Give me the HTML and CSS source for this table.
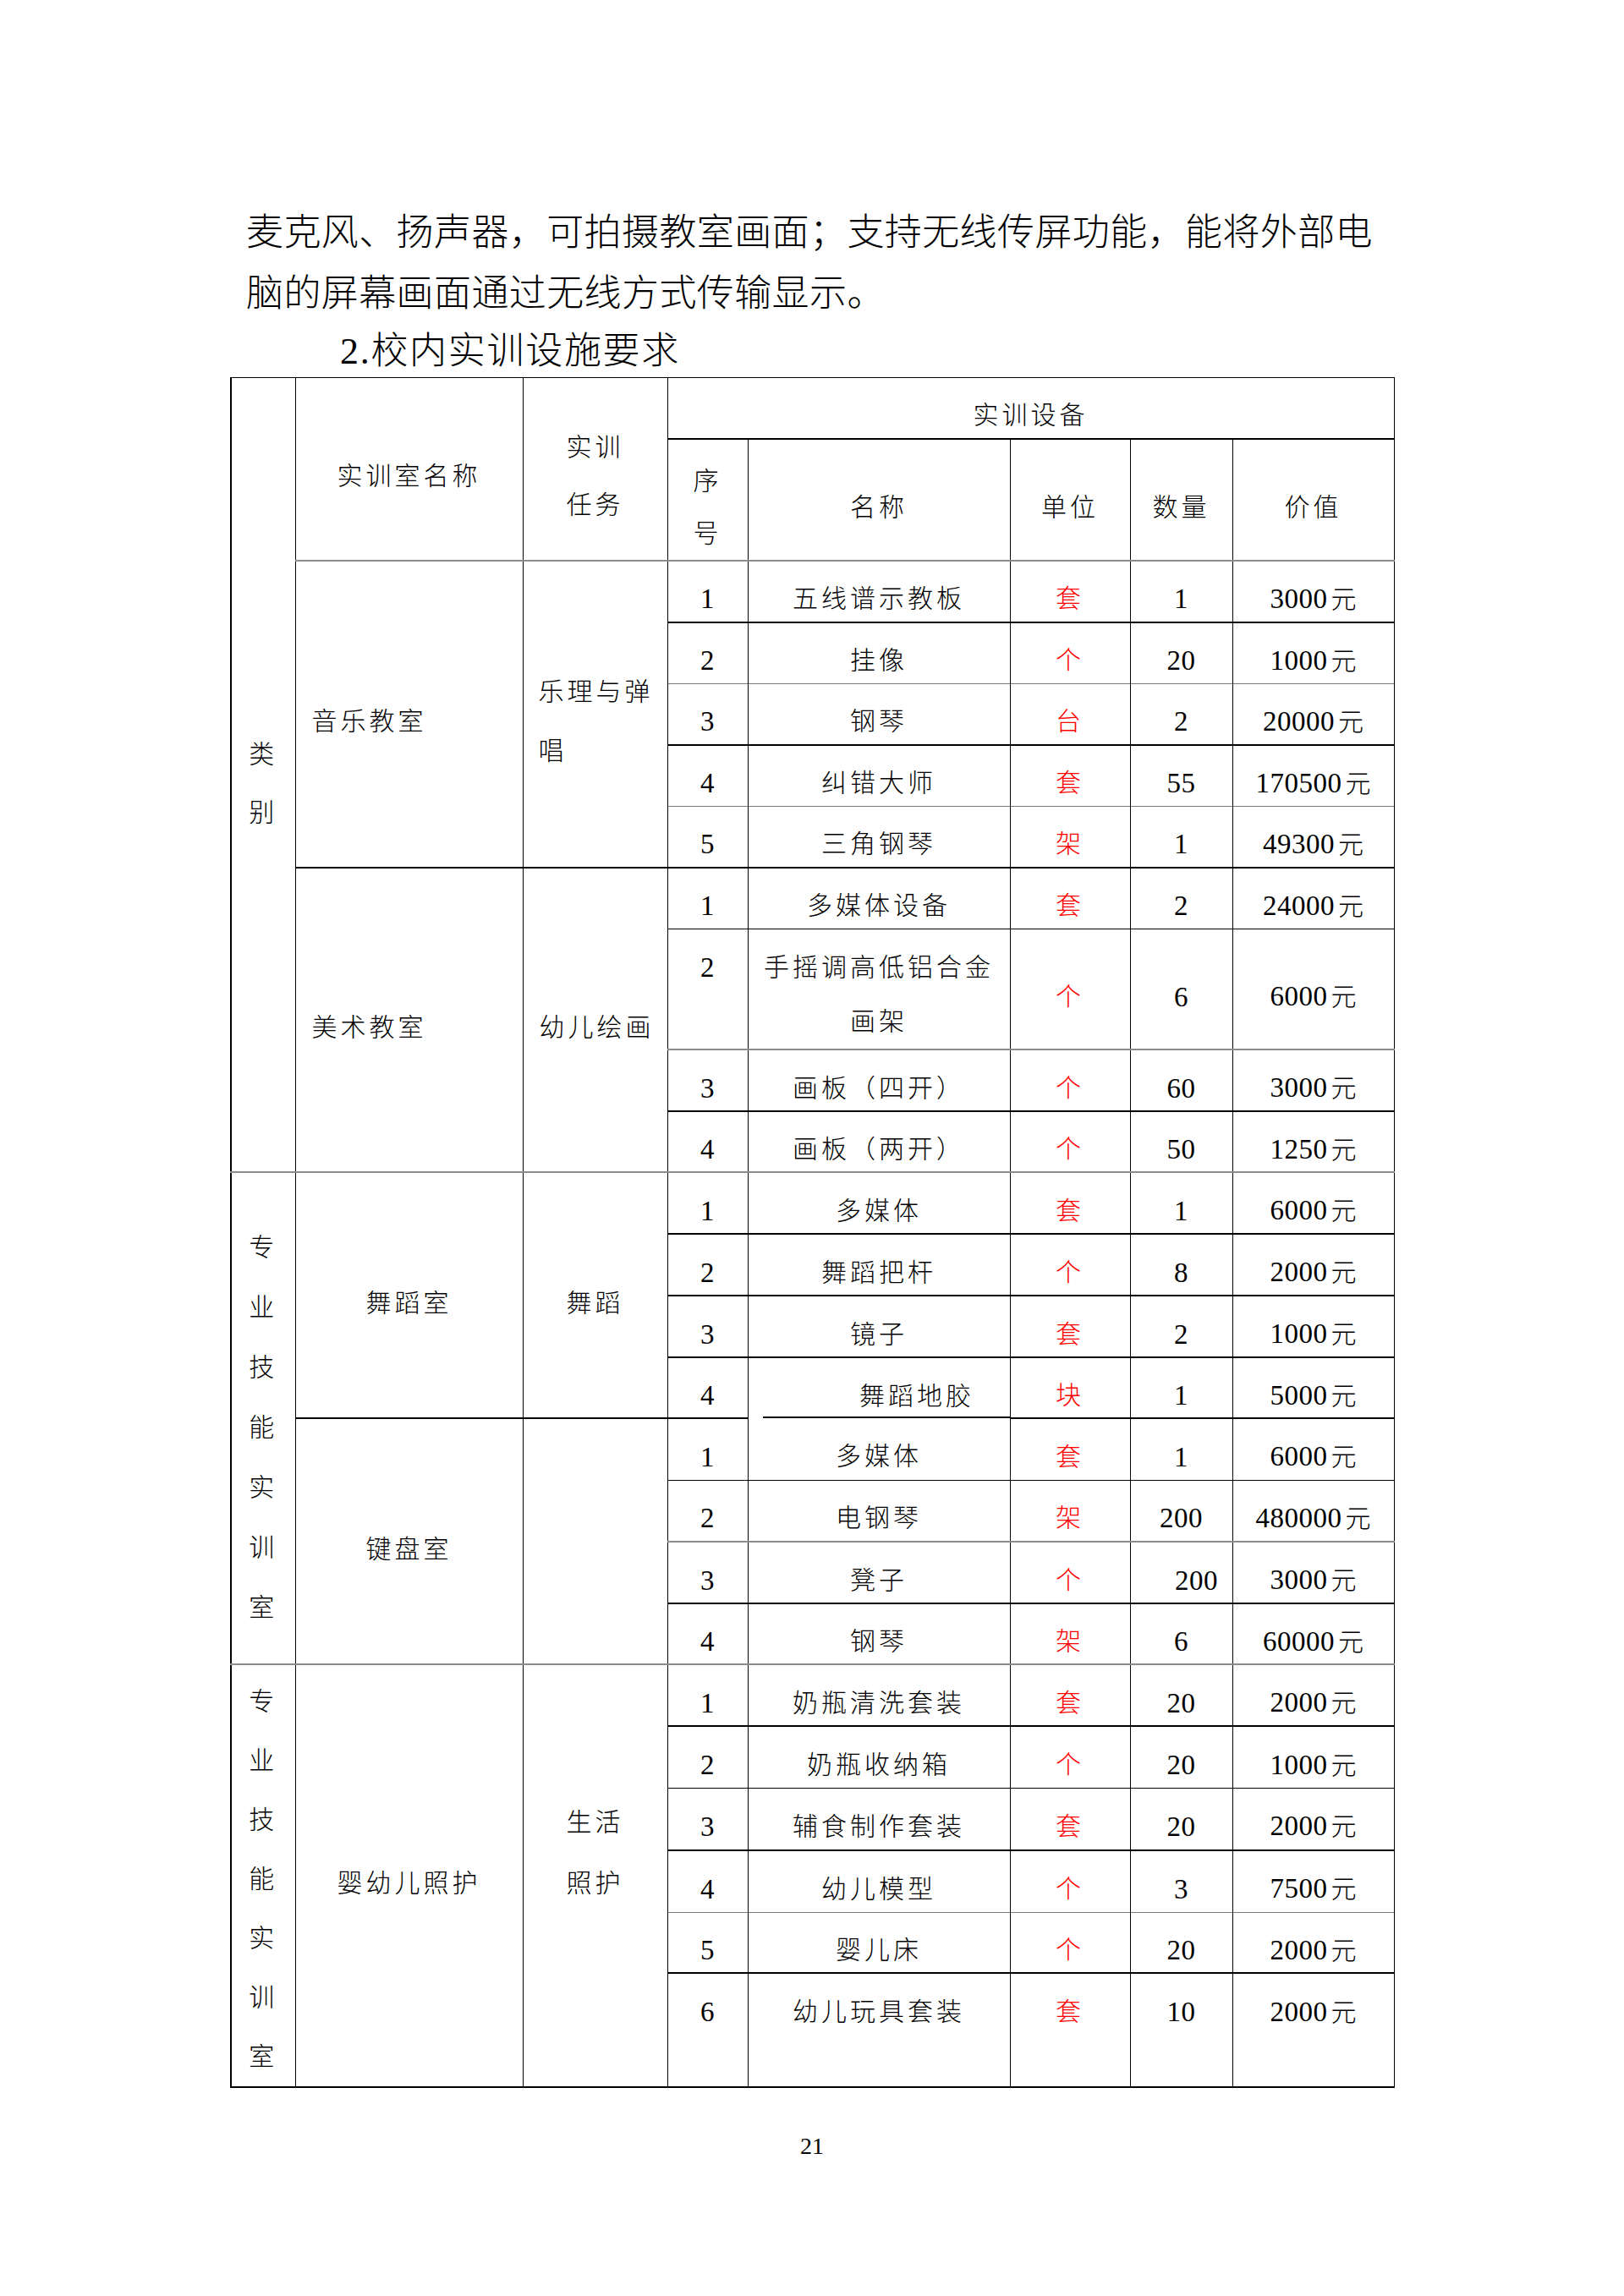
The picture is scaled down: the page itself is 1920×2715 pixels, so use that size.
FILE: index.html
```html
<!DOCTYPE html>
<html lang="zh-CN">
<head>
<meta charset="utf-8">
<title>校内实训设施要求</title>
<link rel="stylesheet" href="styles.css">
</head>
<body>
<div class="page">
  <p class="para">麦克风、扬声器，可拍摄教室画面；支持无线传屏功能，能将外部电<br>脑的屏幕画面通过无线方式传输显示。</p>
  <h2 class="heading">2.校内实训设施要求</h2>
  <table class="grid">
    <colgroup>
      <col class="c1"><col class="c2"><col class="c3"><col class="c4"><col class="c5"><col class="c6"><col class="c7"><col class="c8">
    </colgroup>
    <tbody>
      <tr class="r72">
        <td rowspan="11" class="cat1">类<br>别</td>
        <td rowspan="2">实训室名称</td>
        <td rowspan="2" class="hd2">实训<br>任务</td>
        <td colspan="5">实训设备</td>
      </tr>
      <tr class="tk r143">
        <td class="seqh">序<br>号</td>
        <td>名称</td>
        <td>单位</td>
        <td>数量</td>
        <td>价值</td>
      </tr>

      <tr class="gy r73">
        <td rowspan="5" class="left">音乐教室</td>
        <td rowspan="5" class="left wrap2">乐理与弹<br>唱</td>
        <td class="n">1</td><td>五线谱示教板</td><td class="u">套</td><td class="n">1</td><td class="n">3000<span class="y">元</span></td>
      </tr>
      <tr class="tk r73">
        <td class="n">2</td><td>挂像</td><td class="u">个</td><td class="n">20</td><td class="n">1000<span class="y">元</span></td>
      </tr>
      <tr class="gt r72">
        <td class="n">3</td><td>钢琴</td><td class="u">台</td><td class="n">2</td><td class="n">20000<span class="y">元</span></td>
      </tr>
      <tr class="tk r73">
        <td class="n">4</td><td>纠错大师</td><td class="u">套</td><td class="n">55</td><td class="n">170500<span class="y">元</span></td>
      </tr>
      <tr class="gt r72">
        <td class="n">5</td><td>三角钢琴</td><td class="u">架</td><td class="n">1</td><td class="n">49300<span class="y">元</span></td>
      </tr>

      <tr class="tk r73">
        <td rowspan="4" class="left">美术教室</td>
        <td rowspan="4" class="left">幼儿绘画</td>
        <td class="n">1</td><td>多媒体设备</td><td class="u">套</td><td class="n">2</td><td class="n">24000<span class="y">元</span></td>
      </tr>
      <tr class="tn r142">
        <td class="n top">2</td><td class="tall">手摇调高低铝合金<br>画架</td><td class="u">个</td><td class="n">6</td><td class="n">6000<span class="y">元</span></td>
      </tr>
      <tr class="gy r73">
        <td class="n">3</td><td>画板（四开）</td><td class="u">个</td><td class="n">60</td><td class="n">3000<span class="y">元</span></td>
      </tr>
      <tr class="tk r72">
        <td class="n">4</td><td>画板（两开）</td><td class="u">个</td><td class="n">50</td><td class="n">1250<span class="y">元</span></td>
      </tr>

      <tr class="gy r73">
        <td rowspan="8" class="cat2">专<br>业<br>技<br>能<br>实<br>训<br>室</td>
        <td rowspan="4">舞蹈室</td>
        <td rowspan="4">舞蹈</td>
        <td class="n">1</td><td>多媒体</td><td class="u">套</td><td class="n">1</td><td class="n">6000<span class="y">元</span></td>
      </tr>
      <tr class="tk r73">
        <td class="n">2</td><td>舞蹈把杆</td><td class="u">个</td><td class="n">8</td><td class="n">2000<span class="y">元</span></td>
      </tr>
      <tr class="tk r73">
        <td class="n">3</td><td>镜子</td><td class="u">套</td><td class="n">2</td><td class="n">1000<span class="y">元</span></td>
      </tr>
      <tr class="tk r72">
        <td class="n">4</td><td class="ul">舞蹈地胶</td><td class="u">块</td><td class="n">1</td><td class="n">5000<span class="y">元</span></td>
      </tr>

      <tr class="tk r73">
        <td rowspan="4">键盘室</td>
        <td rowspan="4"></td>
        <td class="n">1</td><td class="nogap">多媒体</td><td class="u">套</td><td class="n">1</td><td class="n">6000<span class="y">元</span></td>
      </tr>
      <tr class="tn r73">
        <td class="n">2</td><td>电钢琴</td><td class="u">架</td><td class="n">200</td><td class="n">480000<span class="y">元</span></td>
      </tr>
      <tr class="gy r73">
        <td class="n">3</td><td>凳子</td><td class="u">个</td><td class="n sh">200</td><td class="n">3000<span class="y">元</span></td>
      </tr>
      <tr class="tk r72">
        <td class="n">4</td><td>钢琴</td><td class="u">架</td><td class="n">6</td><td class="n">60000<span class="y">元</span></td>
      </tr>

      <tr class="gy r73">
        <td rowspan="6" class="cat3">专<br>业<br>技<br>能<br>实<br>训<br>室</td>
        <td rowspan="6">婴幼儿照护</td>
        <td rowspan="6" class="life">生活<br>照护<br>&nbsp;</td>
        <td class="n">1</td><td>奶瓶清洗套装</td><td class="u">套</td><td class="n">20</td><td class="n">2000<span class="y">元</span></td>
      </tr>
      <tr class="tk r73">
        <td class="n">2</td><td>奶瓶收纳箱</td><td class="u">个</td><td class="n">20</td><td class="n">1000<span class="y">元</span></td>
      </tr>
      <tr class="tn r73">
        <td class="n">3</td><td>辅食制作套装</td><td class="u">套</td><td class="n">20</td><td class="n">2000<span class="y">元</span></td>
      </tr>
      <tr class="tk r73">
        <td class="n">4</td><td>幼儿模型</td><td class="u">个</td><td class="n">3</td><td class="n">7500<span class="y">元</span></td>
      </tr>
      <tr class="gt r72">
        <td class="n">5</td><td>婴儿床</td><td class="u">个</td><td class="n">20</td><td class="n">2000<span class="y">元</span></td>
      </tr>
      <tr class="tk r134 last">
        <td class="n">6</td><td>幼儿玩具套装</td><td class="u">套</td><td class="n">10</td><td class="n">2000<span class="y">元</span></td>
      </tr>
    </tbody>
  </table>
  <p class="pageno">21</p>
</div>
</body>
</html>
```

FILE: styles.css
```css
html, body {
  margin: 0;
  padding: 0;
  background: #ffffff;
}

body {
  width: 1920px;
  min-height: 2715px;
  color: #000000;
  font-family: "Liberation Serif", "Noto Sans CJK SC", serif;
}

.page {
  padding: 240px 0 0 272px;
}

.para {
  margin: 0;
  padding-left: 19px;
  font-size: 44px;
  line-height: 72px;
  letter-spacing: 0.4px;
  font-weight: 300;
}

.heading {
  margin: 0;
  padding-left: 130px;
  font-size: 44px;
  line-height: 64px;
  letter-spacing: 1.7px;
  font-weight: 300;
}

/* table */
.grid {
  margin-top: -2px;
  border-collapse: collapse;
  table-layout: fixed;
  width: 1375px;
  border-top: 1px solid #000;
  border-left: 2px solid #000;
  border-right: 1px solid #000;
  border-bottom: 2px solid #000;
  font-size: 30px;
  letter-spacing: 4px;
}

.c1 { width: 76px; }
.c2 { width: 269px; }
.c3 { width: 171px; }
.c4 { width: 95px; }
.c5 { width: 310px; }
.c6 { width: 142px; }
.c7 { width: 121px; }
.c8 { width: 191px; }

.grid td {
  border-left: 1px solid #000;
  border-right: 1px solid #000;
  border-top: none;
  border-bottom: none;
  padding: 18px 0 0 0;
  line-height: 40px;
  text-align: center;
  vertical-align: middle;
  font-weight: 300;
  white-space: nowrap;
}

/* row heights */
.r72 { height: 72px; }
.r73 { height: 73px; }
.r134 { height: 134px; }
.r142 { height: 142px; }
.r143 { height: 143px; }

/* row top rules */
tr.tk > td { border-top: 2px solid #000; }
tr.gy > td { border-top: 2px solid #8c8c8c; }
tr.tn > td { border-top: 1px solid #000; }
tr.gt > td { border-top: 1px solid #7a7a7a; }

/* numbers */
.grid td.n {
  font-size: 33px;
  letter-spacing: 0.5px;
}

.grid td.n .y {
  font-size: 30px;
  letter-spacing: 0;
  padding-left: 4px;
}

.grid td.u {
  color: #ff0000;
}

.grid td.sh {
  padding-left: 36px;
}

/* special cells */
.grid td.left {
  text-align: left;
  padding-left: 19px;
}

.grid td.wrap2 {
  padding-left: 18px;
  line-height: 70px;
}

.grid td.hd2 {
  line-height: 68px;
}

.grid td.seqh {
  line-height: 62px;
}

.grid td.cat1 {
  line-height: 69px;
  padding-top: 20px;
}

.grid td.cat2 {
  line-height: 71px;
  padding-top: 20px;
}

.grid td.cat3 {
  line-height: 70px;
  padding-top: 8px;
}

.grid td.life {
  line-height: 72px;
}

.grid td.top {
  vertical-align: top;
  padding-top: 25px;
}

.grid td.tall {
  vertical-align: top;
  line-height: 64px;
  padding-top: 13px;
}

tr.last > td {
  vertical-align: top;
  padding-top: 25px;
}

.grid td.ul {
  padding-left: 90px;
  background: linear-gradient(#000, #000) no-repeat right bottom / calc(100% - 17px) 2px;
}

.grid td.nogap {
  border-top: hidden;
}

.pageno {
  margin: 49px 0 0 -272px;
  width: 1920px;
  text-align: center;
  font-family: "Liberation Serif", serif;
  font-size: 28px;
  line-height: 40px;
}
```
